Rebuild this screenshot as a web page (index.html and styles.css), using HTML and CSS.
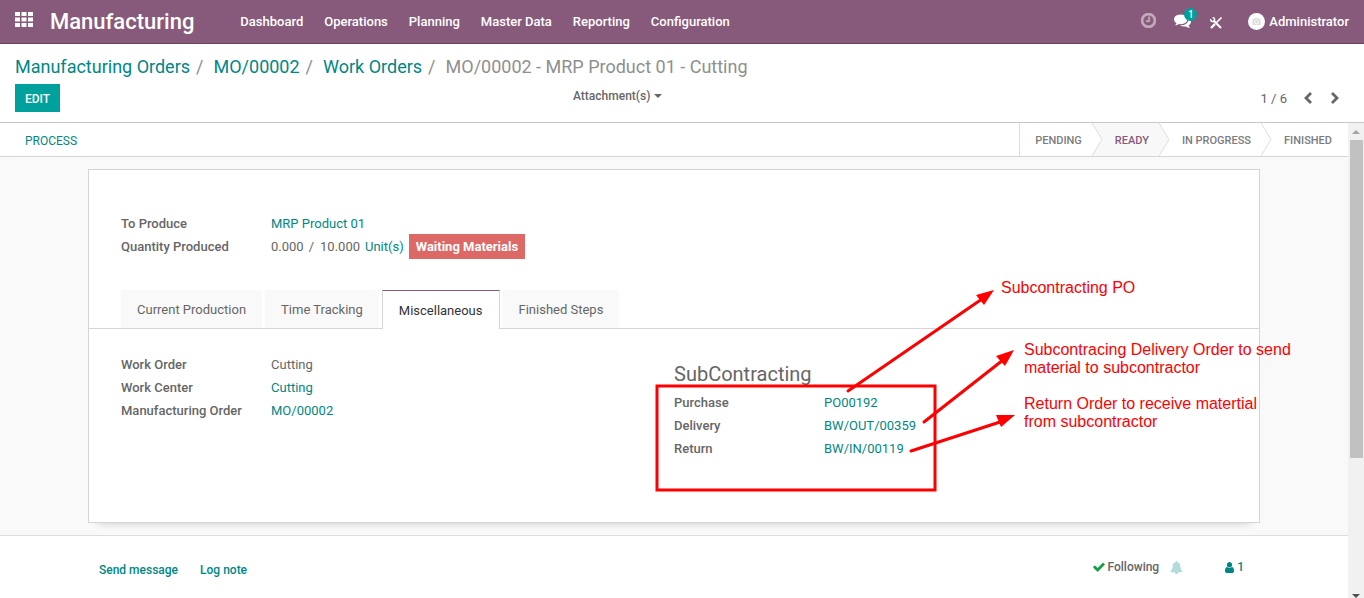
FILE: index.html
```html
<!DOCTYPE html>
<html lang="en">
<head>
<meta charset="utf-8">
<meta name="viewport" content="width=device-width, initial-scale=1">
<title>MO/00002 - MRP Product 01 - Cutting</title>
<link rel="stylesheet" href="styles.css">
</head>
<body>
<header class="navbar">
  <button class="apps" type="button" aria-label="Applications">
    <svg width="18" height="15" viewBox="0 0 18 15" fill="currentColor"><path d="M0 0h5v4H0zM6.500 0h5v4h-5zM13 0h5v4h-5zM0 5.500h5v4H0zM6.500 5.500h5v4h-5zM13 5.500h5v4h-5zM0 11h5v4H0zM6.500 11h5v4h-5zM13 11h5v4h-5z"/></svg>
  </button>
  <a class="brand" href="#">Manufacturing</a>
  <nav class="menu">
    <a href="#">Dashboard</a>
    <a href="#">Operations</a>
    <a href="#">Planning</a>
    <a href="#">Master Data</a>
    <a href="#">Reporting</a>
    <a href="#">Configuration</a>
  </nav>
  <div class="systray">
    <button class="tray-button dim" type="button" aria-label="Activities">
      <svg width="15" height="15" viewBox="128 128 1536 1536" fill="currentColor" stroke="currentColor" stroke-width="60"><path d="M1024 544v448q0 14-9 23t-23 9h-320q-14 0-23-9t-9-23v-64q0-14 9-23t23-9h224v-352q0-14 9-23t23-9h64q14 0 23 9t9 23zm416 352q0-148-73-273t-198-198-273-73-273 73-198 198-73 273 73 273 198 198 273 73 273-73 198-198 73-273zm224 0q0 209-103 385.500t-279.500 279.500-385.500 103-385.500-103-279.500-279.500-103-385.500 103-385.500 279.500-279.500 385.500-103 385.500 103 279.500 279.500 103 385.500z"/></svg>
    </button>
    <button class="tray-button chat" type="button" aria-label="Conversations">
      <svg width="17" height="17" viewBox="0 0 1792 1792" fill="currentColor"><path d="M1408 768q0 139-94 257t-256.500 186.500-353.500 68.500q-86 0-176-16-124 88-278 128-36 9-86 16h-3q-11 0-20.500-8t-11.500-21q-1-3-1-6.500t.5-6.500 2-6l2.500-5 3.500-5.500 4-5 4.500-5 4-4.500q5-6 23-25t26-29.500 22.500-29 25-38.500 20.500-44q-124-72-195-177t-71-224q0-139 94-257t256.500-186.500 353.500-68.500 353.500 68.500 256.500 186.500 94 257zm384 256q0 120-71 224.500t-195 176.500q10 24 20.500 44t25 38.500 22.500 29 26 29.500 23 25q1 1 4 4.500t4.500 5 4 5 3.500 5.500l2.500 5 2 6 .5 6.500-1 6.500q-3 14-13 22t-22 7q-50-7-86-16-154-40-278-128-90 16-176 16-271 0-472-132 58 4 88 4 161 0 309-45t264-129q125-92 192-212t67-254q0-77-23-152 129 71 204 178t75 230z"/></svg>
      <span class="badge">1</span>
    </button>
    <button class="tray-button tools" type="button" aria-label="Developer tools">
      <svg width="12" height="12" viewBox="0 0 12 12" fill="none" stroke="currentColor"><path d="M3.200 3.200L11 11" stroke-width="2"/><path d="M.7 2.200A2 2 0 1 0 2.600.6" stroke-width="1.400"/><path d="M11.500.5L6.500 5.500" stroke-width="1.600"/><path d="M5 7L1 11" stroke-width="2.400"/></svg>
    </button>
    <button class="user" type="button">
      <svg width="17" height="17" viewBox="0 0 17 17"><circle cx="8.500" cy="8.500" r="8.500" fill="#fff"/><path d="M4.500 6H6l.8-1h3.400l.8 1h1.500v6h-8z" fill="#dcdcdc"/><circle cx="8.500" cy="8.800" r="2" fill="#dcdcdc" stroke="#fff" stroke-width=".8"/></svg>
      Administrator
    </button>
  </div>
</header>

<section class="control-panel">
  <ol class="breadcrumb">
    <li><a href="#">Manufacturing Orders</a></li>
    <li><a href="#">MO/00002</a></li>
    <li><a href="#">Work Orders</a></li>
    <li>MO/00002 - MRP Product 01 - Cutting</li>
  </ol>
  <div class="actions">
    <div><button class="edit" type="button">EDIT</button></div>
    <button class="attachments" type="button">Attachment(s)<span class="caret"></span></button>
    <div class="pager">
      <span>1 / 6</span>
      <button type="button" aria-label="Previous"><svg width="8" height="12" viewBox="0 0 8 12" fill="none" stroke="currentColor" stroke-width="2.800"><path d="M7 1L2 6l5 5"/></svg></button>
      <button type="button" aria-label="Next"><svg width="8" height="12" viewBox="0 0 8 12" fill="none" stroke="currentColor" stroke-width="2.800"><path d="M1 1l5 5-5 5"/></svg></button>
    </div>
  </div>
</section>

<div class="viewport">
  <main class="content">
    <div class="statusbar">
      <button class="process" type="button">PROCESS</button>
      <ol class="stages">
        <li>PENDING<svg class="arrow" viewBox="0 0 11 33" width="11" height="33"><path d="M0 0l10 16.500L0 33"/></svg></li>
        <li class="current">READY<svg class="arrow" viewBox="0 0 11 33" width="11" height="33"><path d="M0 0l10 16.500L0 33"/></svg></li>
        <li>IN PROGRESS<svg class="arrow" viewBox="0 0 11 33" width="11" height="33"><path d="M0 0l10 16.500L0 33"/></svg></li>
        <li>FINISHED</li>
      </ol>
    </div>

    <div class="sheet-area">
      <article class="sheet">
        <dl class="fields summary">
          <dt>To Produce</dt><dd><a href="#">MRP Product 01</a></dd>
          <dt>Quantity Produced</dt>
          <dd class="quantity"><span>0.000</span><span class="slash">/</span><span>10.000</span><a href="#">Unit(s)</a><strong class="tag">Waiting Materials</strong></dd>
        </dl>
        <div class="tabs" role="tablist">
          <button type="button" role="tab">Current Production</button>
          <button type="button" role="tab">Time Tracking</button>
          <button class="active" type="button" role="tab" aria-selected="true">Miscellaneous</button>
          <button type="button" role="tab">Finished Steps</button>
        </div>
        <div class="groups">
          <dl class="fields">
            <dt>Work Order</dt><dd>Cutting</dd>
            <dt>Work Center</dt><dd><a href="#">Cutting</a></dd>
            <dt>Manufacturing Order</dt><dd><a href="#">MO/00002</a></dd>
          </dl>
          <section class="subcontracting">
            <h2>SubContracting</h2>
            <dl class="fields">
              <dt>Purchase</dt><dd><a href="#">PO00192</a></dd>
              <dt>Delivery</dt><dd><a href="#">BW/OUT/00359</a></dd>
              <dt>Return</dt><dd><a href="#">BW/IN/00119</a></dd>
            </dl>
            <svg class="notes" width="660" height="220" viewBox="650 280 660 220">
              <g fill="none" stroke="#f00" stroke-width="3" stroke-linecap="round">
                <rect x="657" y="386" width="278" height="104" stroke-linecap="butt"/>
                <path d="M848 391L982 299M924 422L1003 360M911 451L1000 422"/>
              </g>
              <path d="M994 290L976 295L984 305zM1014 350L996 356L1005 366zM1015 415L996 415L1001 427z" fill="#f00"/>
              <g class="note-text">
                <text x="1001" y="293">Subcontracting PO</text>
                <text x="1024" y="355">Subcontracing Delivery Order to send</text>
                <text x="1024" y="373">material to subcontractor</text>
                <text x="1024" y="409">Return Order to receive matertial</text>
                <text x="1024" y="427">from subcontractor</text>
              </g>
            </svg>
          </section>
        </div>
      </article>
    </div>

    <footer class="chatter">
      <div class="chatter-bar">
        <button class="message" type="button">Send message</button>
        <button class="message" type="button">Log note</button>
        <div class="followers">
          <button class="following" type="button"><svg width="12" height="12" viewBox="100 200 1600 1400" fill="#17a04b"><path d="M1671 566q0 40-28 68l-724 724-136 136q-28 28-68 28t-68-28l-136-136-362-362q-28-28-28-68t28-68l136-136q28-28 68-28t68 28l294 295 656-657q28-28 68-28t68 28l136 136q28 28 28 68z"/></svg>Following</button>
          <button class="bell" type="button" aria-label="Notifications"><svg width="13" height="13" viewBox="0 0 1792 1792" fill="currentColor"><path d="M1728 1408q0 52-38 90t-90 38h-448q0 106-75 181t-181 75-181-75-75-181h-448q-52 0-90-38t-38-90q50-42 91-88t85-119.500 74.500-158.500 50-206 19.500-260q0-152 117-282.500t307-158.500q-8-19-8-39 0-40 28-68t68-28 68 28 28 68q0 20-8 39 190 28 307 158.500t117 282.500q0 139 19.500 260t50 206 74.500 158.500 85 119.500 91 88z"/></svg></button>
          <button class="count" type="button"><svg width="9" height="11" viewBox="256 128 1280 1536" fill="currentColor"><path d="M1536 1399q0 109-62.500 187t-150.500 78h-854q-88 0-150.500-78t-62.500-187q0-85 8.500-160.500t31.500-152 58.500-131 94-89 134.500-34.500q131 128 313 128t313-128q76 0 134.500 34.500t94 89 58.500 131 31.500 152 8.500 160.500zm-256-887q0 159-112.500 271.500t-271.500 112.500-271.500-112.500-112.500-271.500 112.500-271.500 271.500-112.500 271.500 112.500 112.500 271.500z"/></svg>1</button>
        </div>
      </div>
    </footer>
  </main>
  <div class="scrollbar" aria-hidden="true">
    <span class="scroll-up"></span>
    <span class="scroll-track"><span class="scroll-thumb"></span></span>
    <span class="scroll-down"></span>
  </div>
</div>
</body>
</html>
```
FILE: styles.css
```css
* { box-sizing: border-box; }

body {
  margin: 0;
  height: 100vh;
  display: flex;
  flex-direction: column;
  overflow: hidden;
  font: 13px/20px Roboto, "Liberation Sans", sans-serif;
  color: #666;
  background: #fff;
}

a { color: #008784; text-decoration: none; }
ol, dl, dd, h2 { margin: 0; padding: 0; }
ol { list-style: none; }
button {
  padding: 0;
  border: 0;
  background: none;
  font: inherit;
  color: inherit;
  cursor: pointer;
}
svg { display: block; flex: none; }

/* Top bar */
.navbar {
  flex: none;
  display: flex;
  align-items: center;
  min-height: 44px;
  padding: 0 15px;
  background: #875a7b;
  border-bottom: 1px solid #68465f;
  color: #fff;
  font-weight: 500;
}
.navbar a { color: #fff; }
.apps { padding-bottom: 4px; }
.brand { margin-left: 17px; font-size: 22px; }
.menu { display: flex; gap: 21px; margin-left: 46px; }
.systray { display: flex; align-items: center; margin-left: auto; }
.tray-button { position: relative; }
.dim { opacity: .5; padding-bottom: 2px; }
.chat { margin-left: 18px; padding-bottom: 2px; }
.badge {
  position: absolute;
  top: -4px;
  right: -6px;
  width: 13px;
  height: 13px;
  border-radius: 7px;
  background: #00a09d;
  font-size: 10px;
  line-height: 13px;
}
.tools { margin-left: 19px; padding-top: 3px; }
.user { display: flex; align-items: center; gap: 4px; margin-left: 26px; }

/* Breadcrumb and actions */
.control-panel {
  flex: none;
  padding: 10px 15px;
  border-bottom: 1px solid #c8c8c8;
}
.breadcrumb {
  display: flex;
  font-size: 18px;
  line-height: 26px;
  color: #8f8f8f;
}
.breadcrumb li + li::before { content: "/"; padding: 0 10px 0 6px; color: #8f8f8f; }
.actions {
  display: grid;
  grid-template-columns: 558px auto 1fr;
  align-items: start;
  padding-top: 4px;
}
.edit {
  height: 28px;
  padding: 1px 10px 0;
  background: #00a09d;
  color: #fff;
  font-size: 12px;
  font-weight: 500;
}
.attachments { display: flex; align-items: center; gap: 4px; font-size: 12px; font-weight: 500; line-height: 24px; }
.caret {
  border: 4px solid transparent;
  border-top-color: currentColor;
  border-bottom: 0;
}
.pager {
  display: flex;
  align-items: center;
  justify-content: flex-end;
  gap: 19px;
  padding: 3px 10px 0 0;
}
.pager span { margin-right: -2px; padding-top: 2px; }

/* Scrolling area */
.viewport { flex: 1; min-height: 0; display: flex; }
.content { flex: 1; min-width: 0; overflow: hidden; }

.statusbar {
  display: flex;
  justify-content: space-between;
  height: 34px;
  padding-left: 25px;
  border-bottom: 1px solid #d5d5d5;
}
.process { padding-top: 2px; color: #008784; font-size: 12px; }
.stages { display: flex; font-size: 11px; font-weight: 500; line-height: 35px; border-left: 1px solid #ddd; color: #7c7c7c; }
.stages li { position: relative; height: 33px; padding: 0 10px 0 23px; }
.stages li:first-child { padding-left: 15px; }
.stages li:last-child { padding-right: 16px; }
.stages .current { background: #f8f8f8; color: #875a7b; }
.arrow { position: absolute; top: 0; left: 100%; z-index: 1; fill: #fff; stroke: #ddd; }
.current .arrow { fill: #f8f8f8; }

.sheet-area { padding: 12px 16px; background: #f9f9f9; }
.sheet {
  max-width: 1172px;
  margin: 0 auto;
  padding: 42px 0 62px;
  border: 1px solid #d5d5d5;
  background: #fff;
  box-shadow: 0 10px 8px -10px rgba(0, 0, 0, .2);
}
.fields {
  display: grid;
  grid-template-columns: 150px 1fr;
  grid-auto-rows: 23px;
  align-content: start;
  line-height: 23px;
}
.fields dt { font-weight: 500; }
.summary { padding: 0 32px; }
.quantity { display: flex; align-items: center; gap: 5px; white-space: nowrap; }
.slash { padding-right: 1px; }
.tag { padding: 0 7px; line-height: 25px; background: #dc6965; color: #fff; font-weight: 700; }

.tabs {
  display: flex;
  gap: 3px;
  margin-top: 32px;
  padding: 0 32px;
  border-bottom: 1px solid #d5d5d5;
}
.tabs button { height: 38px; padding: 2px 16px 0; background: #f9f9f9; }
.tabs .active {
  height: 39px;
  margin-bottom: -1px;
  border: 1px solid #d5d5d5;
  border-top-color: #875a7b;
  border-bottom: 0;
  background: #fff;
  color: #333;
}

.groups { display: grid; grid-template-columns: 1fr 1fr; padding: 24px 32px 0; }
.subcontracting { position: relative; padding-top: 9px; }
.subcontracting h2 { font-size: 20px; font-weight: 400; line-height: 24px; padding-bottom: 5px; }
.notes { position: absolute; top: -73px; left: -24px; pointer-events: none; }
.note-text { fill: #f00; font: 16px "Liberation Sans", sans-serif; }

/* Chatter */
.chatter { border-top: 1px solid #ddd; padding: 24px 16px; }
.chatter-bar {
  display: flex;
  align-items: center;
  max-width: 1150px;
  margin: 0 auto;
  font-weight: 500;
}
.message { margin-right: 22px; color: #008784; font-size: 12px; }
.followers { display: flex; align-items: center; align-self: flex-start; margin: -3px 0 0 auto; padding-right: 5px; font-size: 12px; }
.following { display: flex; align-items: center; gap: 3px; }
.bell { margin-left: 11px; color: #b2dbda; }
.count { display: flex; align-items: center; gap: 3px; margin-left: 42px; color: #008784; }

/* Scroll bar */
.scrollbar { flex: none; display: flex; flex-direction: column; width: 16px; background: #f1f1f1; }
.scroll-up, .scroll-down { align-self: center; border: 4px solid transparent; }
.scroll-up { margin: 3px 0 6px; border-bottom-color: #a3a3a3; }
.scroll-track { flex: 1; padding: 0 1px 0 2px; }
.scroll-thumb { display: block; height: 70%; background: #c1c1c1; }
.scroll-down { border-top-color: #505050; border-bottom: 0; }
```
